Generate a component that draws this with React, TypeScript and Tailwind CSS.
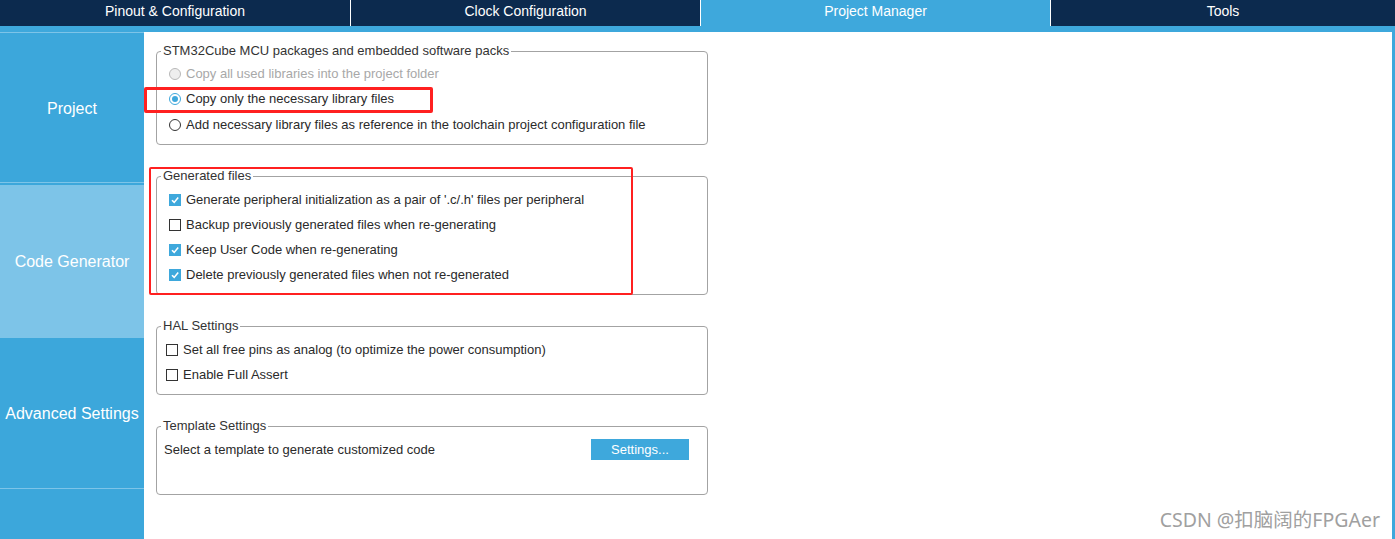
import type { ReactNode } from "react";

const FONT = { fontFamily: '"Liberation Sans", Arial, sans-serif' };

const tabs = [
  { label: "Pinout & Configuration", active: false },
  { label: "Clock Configuration", active: false },
  { label: "Project Manager", active: true },
  { label: "Tools", active: false },
];

function Radio({ state }: { state: "on" | "off" | "disabled" }) {
  if (state === "on")
    return (
      <span className="w-[12px] h-[12px] rounded-full border border-[#3ea8dc] bg-white flex items-center justify-center shrink-0">
        <span className="w-[6px] h-[6px] rounded-full bg-[#3ea8dc]" />
      </span>
    );
  if (state === "disabled")
    return <span className="w-[12px] h-[12px] rounded-full border border-[#b8b8b8] bg-[#eeeeee] shrink-0" />;
  return <span className="w-[12px] h-[12px] rounded-full border border-[#333] bg-white shrink-0" />;
}

function Check({ on }: { on: boolean }) {
  if (!on) return <span className="w-[12px] h-[12px] border border-[#333] bg-white shrink-0" />;
  return (
    <span className="w-[12px] h-[12px] bg-[#3ea8dc] flex items-center justify-center shrink-0">
      <svg width="10" height="10" viewBox="0 0 10 10">
        <path d="M2 5.2 L4.2 7.4 L8.2 2.6" stroke="#fff" strokeWidth="1.6" fill="none" />
      </svg>
    </span>
  );
}

function Group({ title, className, inner, children }: { title: string; className: string; inner: string; children: ReactNode }) {
  return (
    <fieldset className={`border border-[#a3a3a3] rounded-[4px] w-[552px] ${className}`}>
      <legend className="ml-[4px] px-[2px] text-[13px] leading-[14px] text-[#333]">{title}</legend>
      <div className={inner}>{children}</div>
    </fieldset>
  );
}

function Row({ children, className = "" }: { children: ReactNode; className?: string }) {
  return <div className={`h-[25px] flex items-center gap-[5px] text-[13px] text-[#2a2a2a] ${className}`}>{children}</div>;
}

export default function App() {
  return (
    <div className="w-[1395px] h-[539px] flex flex-col bg-white overflow-hidden relative" style={FONT}>
      {/* top tabs */}
      <div className="h-[26px] flex bg-[#0c2a4e] shrink-0">
        {tabs.map((t, i) => (
          <div
            key={t.label}
            className={`${i === 3 ? "flex-1" : "w-[350px]"} flex items-center justify-center pb-[4px] text-white text-[14px] ${
              i > 0 ? "border-l border-white" : ""
            } ${t.active ? "bg-[#3ea8dc]" : ""}`}
          >
            {t.label}
          </div>
        ))}
      </div>
      <div className="h-[6px] bg-[#3ea8dc] shrink-0" />

      <div className="flex flex-1 min-h-0">
        {/* sidebar */}
        <div className="w-[144px] bg-[#3ca7db] flex flex-col text-white text-[16px] shrink-0">
          <div className="h-px bg-[#7dc4e8]" />
          <div className="h-[149px] flex items-center justify-center pt-[2px]">Project</div>
          <div className="h-px bg-[#7dc4e8]" />
          <div className="h-[2px]" />
          <div className="h-[153px] bg-[#7dc4e8] flex items-center justify-center">Code Generator</div>
          <div className="h-[150px] flex items-center justify-center pt-[2px]">Advanced Settings</div>
          <div className="h-px bg-[#7dc4e8]" />
          <div className="flex-1" />
        </div>

        {/* content */}
        <div className="flex-1 pl-[12px] relative">
          <Group title="STM32Cube MCU packages and embedded software packs" className="mt-[12px] h-[101px]" inner="pl-[12px] pt-[3px]">
            <Row className="text-[#a8a8a8]">
              <Radio state="disabled" />
              Copy all used libraries into the project folder
            </Row>
            <Row className="h-[26px]">
              <Radio state="on" />
              Copy only the necessary library files
            </Row>
            <Row>
              <Radio state="off" />
              Add necessary library files as reference in the toolchain project configuration file
            </Row>
          </Group>

          <Group title="Generated files" className="mt-[24px] h-[126px]" inner="pl-[12px] pt-[4px]">
            <Row>
              <Check on />
              Generate peripheral initialization as a pair of '.c/.h' files per peripheral
            </Row>
            <Row>
              <Check on={false} />
              Backup previously generated files when re-generating
            </Row>
            <Row>
              <Check on />
              Keep User Code when re-generating
            </Row>
            <Row>
              <Check on />
              Delete previously generated files when not re-generated
            </Row>
          </Group>

          <Group title="HAL Settings" className="mt-[24px] h-[76px]" inner="pl-[9px] pt-[4px]">
            <Row>
              <Check on={false} />
              Set all free pins as analog (to optimize the power consumption)
            </Row>
            <Row>
              <Check on={false} />
              Enable Full Assert
            </Row>
          </Group>

          <Group title="Template Settings" className="mt-[24px] h-[76px]" inner="pl-[7px] pt-[4px]">
            <div className="h-[25px] flex items-center justify-between pr-[18px] text-[13px] text-[#2a2a2a]">
              <span>Select a template to generate customized code</span>
              <button className="w-[98px] h-[21px] bg-[#3ea8dc] text-white text-[13px]">Settings...</button>
            </div>
          </Group>

          {/* red annotation boxes */}
          <div className="absolute left-[0px] top-[55px] w-[289px] h-[26px] border-[3px] border-[#ff2020] rounded-[2px]" />
          <div className="absolute left-[5px] top-[135px] w-[484px] h-[128px] border-[2px] border-[#ff2020] rounded-[2px]" />
        </div>

        <div className="w-[3px] bg-[#3ea8dc] shrink-0" />
      </div>

      <div
        className="absolute right-[15px] bottom-[5px] text-[19.5px] text-[#a0a0a0]"
        style={{ fontFamily: '"Noto Sans", "Noto Sans CJK SC", sans-serif' }}
      >
        CSDN @扣脑阔的FPGAer
      </div>
    </div>
  );
}
